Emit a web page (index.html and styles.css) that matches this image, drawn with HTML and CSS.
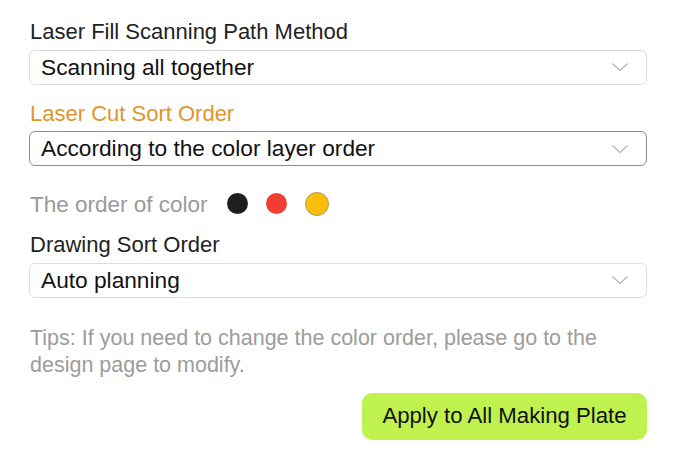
FILE: index.html
```html
<!DOCTYPE html>
<html>
<head>
<meta charset="utf-8">
<link rel="stylesheet" href="styles.css">
</head>
<body>
<div class="panel">
  <div class="label">Laser Fill Scanning Path Method</div>
  <div class="select"><span>Scanning all together</span><svg class="chev" width="18" height="10" viewBox="0 0 18 10"><path d="M1.5 1.5 L9 8.5 L16.5 1.5" fill="none" stroke="#bdbdbd" stroke-width="1.6"/></svg></div>
  <div class="label orange">Laser Cut Sort Order</div>
  <div class="select dark"><span>According to the color layer order</span><svg class="chev" width="18" height="10" viewBox="0 0 18 10"><path d="M1.5 1.5 L9 8.5 L16.5 1.5" fill="none" stroke="#bdbdbd" stroke-width="1.6"/></svg></div>
  <div class="colors">
    <span class="muted">The order of color</span>
    <span class="dot black"></span>
    <span class="dot red"></span>
    <span class="dot yellow"></span>
  </div>
  <div class="label">Drawing Sort Order</div>
  <div class="select"><span>Auto planning</span><svg class="chev" width="18" height="10" viewBox="0 0 18 10"><path d="M1.5 1.5 L9 8.5 L16.5 1.5" fill="none" stroke="#bdbdbd" stroke-width="1.6"/></svg></div>
  <p class="tips">Tips: If you need to change the color order, please go to the design page to modify.</p>
  <div class="actions"><button class="apply">Apply to All Making Plate</button></div>
</div>
</body>
</html>
```
FILE: styles.css
```css
html, body { margin: 0; padding: 0; background: #fff; }
body { font-family: "Liberation Sans", Arial, sans-serif; color: #222; }
.panel { width: 618px; padding: 19px 0 0 29px; display: flex; flex-direction: column; }
.label { font-size: 22px; line-height: 26px; color: #222; margin-left: 1px; }
.label.orange { color: #e0952c; }
.select { margin-top: 4.5px; height: 35px; box-sizing: border-box; border: 1px solid #dcdcdc; border-radius: 6px; display: flex; align-items: center; justify-content: space-between; padding: 0 17px 0 11px; font-size: 22.7px; color: #111; }
.select.dark { border-color: #8c8c8c; }
.select + .label { margin-top: 16px; }
.colors { display: flex; align-items: center; margin-top: 26px; height: 26px; }
.muted { color: #9a9a9a; font-size: 22.5px; line-height: 26px; margin-left: 1px; margin-right: 19px; }
.dot { width: 21px; height: 21px; border-radius: 50%; box-sizing: border-box; margin-right: 18px; margin-bottom: 3px; }
.dot.black { background: #1e1e1e; }
.dot.red { background: #f23d33; }
.dot.yellow { background: #fcbd0c; border: 1.5px solid #b39a5e; width: 24px; height: 24px; }
.colors + .label { margin-top: 14px; }
.tips { margin: 27px 0 0 1px; font-size: 21.5px; line-height: 27px; color: #9c9c9c; }
.actions { display: flex; justify-content: flex-end; margin-top: 14px; }
.apply { height: 47px; width: 285px; background: #bff24e; border: none; border-radius: 10px; font-family: inherit; font-size: 22.2px; color: #111; padding: 0; }
```
